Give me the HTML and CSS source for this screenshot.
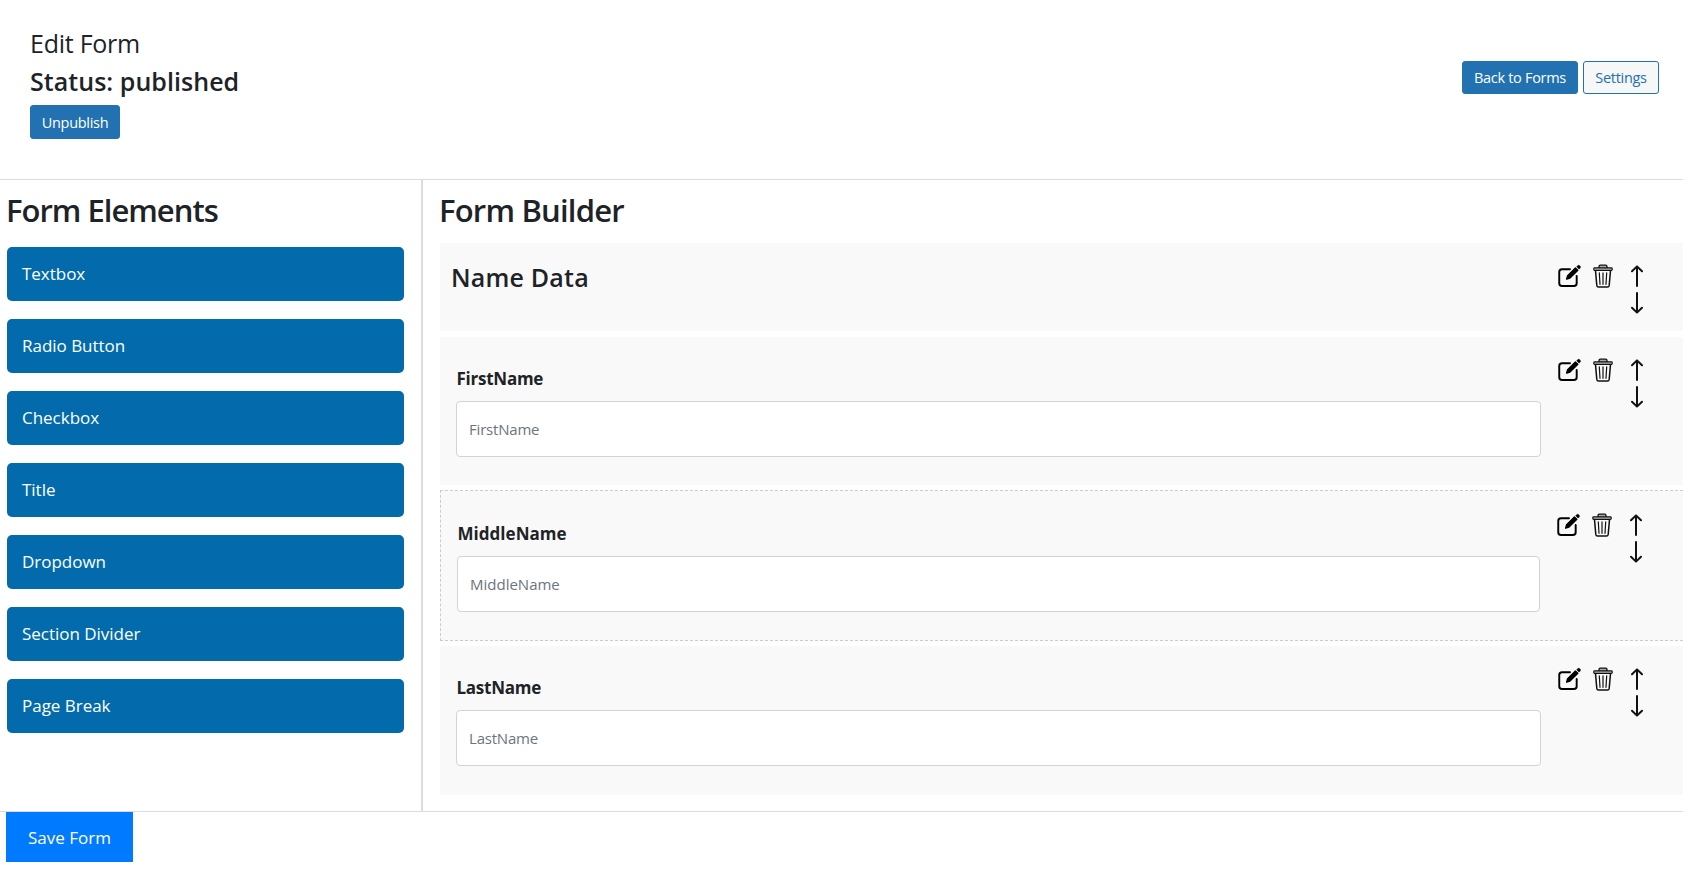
FILE: index.html
```html
<!DOCTYPE html>
<html lang="en">
<head>
<meta charset="utf-8">
<title>Edit Form</title>
<link rel="stylesheet" href="styles.css">
</head>
<body>
<svg class="sprite" aria-hidden="true">
  <symbol id="edit" viewBox="0 0 24 24">
    <path d="M12.5 5H4.2Q1.3 5 1.3 7.9V19.5Q1.3 22.4 4.2 22.4H16.6Q19.5 22.4 19.5 19.5V12" fill="none" stroke="#000" stroke-width="2" stroke-linecap="round"/>
    <path d="M9 15.3L10 11.6L18.2 3.6L20.7 6.1L12.5 14.1Z" fill="#000" stroke="#000" stroke-width="1.4" stroke-linejoin="round"/>
    <path d="M19.6 2.4L20.5 1.3Q21.5 .4 22.8 1.4Q24 2.7 23 3.9L21.9 4.7Z" fill="#000" stroke="#000" stroke-width=".6"/>
  </symbol>
  <symbol id="trash" viewBox="0 0 20 24">
    <path d="M6 4V2.6Q6 1.2 7.3 1.2H12.7Q14 1.2 14 2.6V4" fill="#aaa" stroke="#111" stroke-width="1.3"/>
    <rect x=".8" y="3.9" width="18.4" height="2.5" rx=".8" fill="#bbb" stroke="#111" stroke-width="1.2"/>
    <path d="M2.5 6.6L3.8 21.4Q4 23 5.5 23H14.5Q16 23 16.2 21.4L17.5 6.6" fill="none" stroke="#111" stroke-width="1.5"/>
    <path d="M6.3 8.8L7 20.3M10 8.8V20.3M13.7 8.8L13 20.3" fill="none" stroke="#111" stroke-width="1.2" stroke-linecap="round"/>
  </symbol>
  <symbol id="up" viewBox="0 0 12 22">
    <path d="M6 21V1.6M1 6.2L6 1.4L11 6.2" fill="none" stroke="#111" stroke-width="2" stroke-linecap="round" stroke-linejoin="round"/>
  </symbol>
  <symbol id="down" viewBox="0 0 12 22">
    <path d="M6 1V20.4M1 15.8L6 20.6L11 15.8" fill="none" stroke="#111" stroke-width="2" stroke-linecap="round" stroke-linejoin="round"/>
  </symbol>
</svg>

<header class="header">
  <div class="header-info">
    <h1 class="page-title">Edit Form</h1>
    <h2 class="status">Status: published</h2>
    <button class="btn btn-unpublish">Unpublish</button>
  </div>
  <div class="header-actions">
    <button class="btn btn-back">Back to Forms</button>
    <button class="btn btn-outline">Settings</button>
  </div>
</header>

<main class="workspace">
  <aside class="elements">
    <h2 class="section-title elements-title">Form Elements</h2>
    <ul class="element-list">
      <li class="element">Textbox</li>
      <li class="element">Radio Button</li>
      <li class="element">Checkbox</li>
      <li class="element">Title</li>
      <li class="element">Dropdown</li>
      <li class="element">Section Divider</li>
      <li class="element">Page Break</li>
    </ul>
  </aside>
  <section class="builder">
    <h2 class="section-title builder-title">Form Builder</h2>
    <div class="card card-title">
      <h3 class="card-heading">Name Data</h3>
      <div class="tools">
        <svg class="icon-edit"><use href="#edit"/></svg>
        <svg class="icon-trash"><use href="#trash"/></svg>
        <div class="move"><svg class="icon-arrow"><use href="#up"/></svg><svg class="icon-arrow"><use href="#down"/></svg></div>
      </div>
    </div>
    <div class="card card-first">
      <div class="field">
        <label class="label label-first" for="first">FirstName</label>
        <input class="input" id="first" placeholder="FirstName">
      </div>
      <div class="tools">
        <svg class="icon-edit"><use href="#edit"/></svg>
        <svg class="icon-trash"><use href="#trash"/></svg>
        <div class="move"><svg class="icon-arrow"><use href="#up"/></svg><svg class="icon-arrow"><use href="#down"/></svg></div>
      </div>
    </div>
    <div class="card card-active">
      <div class="field">
        <label class="label label-middle" for="middle">MiddleName</label>
        <input class="input input-middle" id="middle" placeholder="MiddleName">
      </div>
      <div class="tools">
        <svg class="icon-edit"><use href="#edit"/></svg>
        <svg class="icon-trash"><use href="#trash"/></svg>
        <div class="move"><svg class="icon-arrow"><use href="#up"/></svg><svg class="icon-arrow"><use href="#down"/></svg></div>
      </div>
    </div>
    <div class="card card-last">
      <div class="field">
        <label class="label label-last" for="last">LastName</label>
        <input class="input" id="last" placeholder="LastName">
      </div>
      <div class="tools">
        <svg class="icon-edit"><use href="#edit"/></svg>
        <svg class="icon-trash"><use href="#trash"/></svg>
        <div class="move"><svg class="icon-arrow"><use href="#up"/></svg><svg class="icon-arrow"><use href="#down"/></svg></div>
      </div>
    </div>
  </section>
</main>

<footer class="footer">
  <button class="save">Save Form</button>
</footer>
</body>
</html>
```
FILE: styles.css
```css
* { box-sizing: border-box; }

body {
  margin: 0;
  height: 869px;
  overflow: hidden;
  background: #fff;
  color: #1d2327;
  font-family: "Segoe UI", "Open Sans", "Noto Sans", sans-serif;
}

h1, h2, h3, ul { margin: 0; padding: 0; }
button, input { font-family: inherit; }
.sprite { display: none; }

.header {
  display: flex;
  justify-content: space-between;
  height: 180px;
  padding: 24px 24px 0 30px;
  border-bottom: 1px solid #dcdcde;
}
.page-title { font-size: 25px; line-height: 38px; font-weight: 400; letter-spacing: -0.25px; }
.status { font-size: 25px; line-height: 38px; font-weight: 600; letter-spacing: 0.05px; }
.header-actions { display: flex; gap: 5px; padding-top: 37px; }
.btn {
  display: block;
  height: 33px;
  padding: 0;
  border: 1px solid #2271b1;
  border-radius: 3px;
  background: #2271b1;
  color: #fff;
  font-size: 14.5px;
  letter-spacing: -0.3px;
}
.btn-unpublish { width: 90px; height: 34px; margin-top: 5px; }
.btn-back { width: 116px; }
.btn-outline { width: 76px; background: #f6f7f7; color: #2271b1; }

.workspace { display: flex; height: 632px; border-bottom: 1px solid #dcdcde; }
.elements { width: 423px; padding: 0 17px 0 7px; border-right: 2px solid #dcdcde; }
.section-title { height: 63px; padding-top: 8px; font-size: 31px; line-height: 44px; font-weight: 600; letter-spacing: -0.8px; text-indent: -1px; }
.elements-title { height: 67px; letter-spacing: -1px; }
.element-list { display: grid; gap: 18px; list-style: none; }
.element {
  height: 54px;
  padding-left: 15px;
  border-radius: 5px;
  background: #036bac;
  color: #fff;
  font-size: 17px;
  line-height: 54px;
  letter-spacing: -0.02px;
}

.builder { flex: 1; padding-left: 17px; }
.card { display: flex; height: 149px; padding: 21px 40px 0 16px; background: #f9f9f9; }
.card-title { height: 88px; margin-bottom: 6px; padding-left: 11px; }
.card-first { height: 148px; margin-bottom: 5px; }
.card-active { height: 151px; margin-bottom: 5px; border: 1px dashed #ccc; border-right: 0; padding: 22px 41px 0 16px; }
.card-heading { flex: 1; margin-top: -6px; font-size: 25px; line-height: 38px; font-weight: 600; letter-spacing: 0.2px; }
.field { flex: 1; padding-top: 6px; }
.label { display: block; height: 37px; padding-left: 0.5px; font-size: 17px; line-height: 29px; font-weight: 700; letter-spacing: -0.25px; }
.label-middle { letter-spacing: 0.03px; }
.input {
  display: block;
  width: 100%;
  height: 56px;
  padding: 0 12px;
  border: 1px solid #ced4da;
  border-radius: 4px;
  background: #fff;
  font-size: 15px;
  letter-spacing: -0.2px;
}
.input-middle { letter-spacing: 0; }
.input::placeholder { color: #6c757d; }

.tools { display: flex; margin-left: 17px; }
.icon-edit { width: 23px; height: 24px; }
.icon-trash { width: 20px; height: 24px; margin-left: 12px; }
.move { display: flex; flex-direction: column; gap: 5px; margin: 1px 0 0 18px; }
.icon-arrow { width: 12px; height: 22px; }

.footer { padding-left: 6px; }
.save {
  display: block;
  width: 127px;
  height: 50px;
  padding: 0;
  border: 0;
  background: #007bff;
  color: #fff;
  font-size: 17px;
  letter-spacing: 0;
}
```
